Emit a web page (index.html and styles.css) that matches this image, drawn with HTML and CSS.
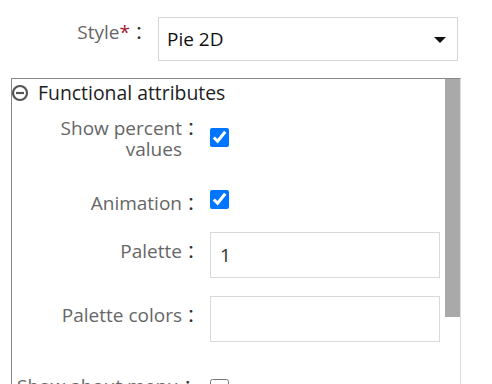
FILE: index.html
```html
<!DOCTYPE html>
<html lang="en">
<head>
    <meta charset="UTF-8">
    <meta name="viewport" content="width=device-width, initial-scale=1.0">
    <title>Chart settings</title>
    <link rel="stylesheet" href="styles.css">
</head>
<body>
    <div class="top-row">
        <label class="label" for="style"><span class="txt">Style<span class="req">*</span></span><span class="colon">：</span></label>
        <div class="select-wrap">
            <select id="style" name="style">
                <option>Pie 2D</option>
                <option>Pie 3D</option>
                <option>Doughnut 2D</option>
            </select>
            <svg class="caret" width="12" height="6" viewBox="0 0 12 6"><path d="M0 0H12L6 6Z" fill="#111"/></svg>
        </div>
    </div>

    <div class="panel">
        <div class="panel-body">
            <div class="panel-title">
                <svg class="toggle" width="20" height="20" viewBox="0 0 20 20">
                    <circle cx="8" cy="10" r="7" fill="none" stroke="#555" stroke-width="2.2"/>
                    <rect x="4" y="8.9" width="8" height="2.2" fill="#555"/>
                </svg>
                Functional attributes
            </div>

            <div class="row row-percent">
                <label class="label" for="showPercent"><span class="txt">Show percent values</span><span class="colon">：</span></label>
                <input class="check" type="checkbox" id="showPercent" checked>
            </div>
            <div class="row row-anim">
                <label class="label" for="animation"><span class="txt">Animation</span><span class="colon">：</span></label>
                <input class="check" type="checkbox" id="animation" checked>
            </div>
            <div class="row row-input">
                <label class="label" for="palette"><span class="txt">Palette</span><span class="colon">：</span></label>
                <input class="text" type="text" id="palette" value="1">
            </div>
            <div class="row row-input">
                <label class="label" for="paletteColors"><span class="txt">Palette colors</span><span class="colon">：</span></label>
                <input class="text" type="text" id="paletteColors">
            </div>
            <div class="row row-about">
                <label class="label label-left" for="aboutMenu"><span class="txt">Show about menu</span><span class="colon">：</span></label>
                <input class="check" type="checkbox" id="aboutMenu">
            </div>
        </div>
        <div class="scrollbar"><div class="thumb"></div></div>
    </div>
</body>
</html>
```

FILE: styles.css
```css
body {
    margin: 0;
    font-family: "Open Sans", "Noto Sans CJK JP", sans-serif;
    font-size: 19px;
    line-height: 20px;
    color: #222;
    background: #fff;
}
.top-row {
    display: flex;
    align-items: flex-start;
    padding-top: 17px;
}
.top-row .label {
    width: 148px;
    padding-top: 5px;
}
.label {
    display: flex;
    justify-content: flex-end;
    align-items: flex-start;
    box-sizing: border-box;
    flex: none;
    color: #666;
}
.label .txt {
    text-align: right;
}
.label-left {
    justify-content: flex-start;
    white-space: nowrap;
}
.colon {
    flex: none;
    width: 18px;
    text-align: center;
    font-family: "Noto Sans CJK JP", sans-serif;
    font-size: 18px;
    color: #333;
}
.req {
    color: #a0182c;
}
.select-wrap {
    position: relative;
    margin-left: 10px;
}
select {
    appearance: none;
    -webkit-appearance: none;
    width: 300px;
    height: 44px;
    box-sizing: border-box;
    border: 1px solid #d6d6d6;
    border-radius: 0;
    background: #fff;
    padding: 0 8px;
    font-family: "Open Sans", sans-serif;
    font-size: 19px;
    color: #111;
    outline: none;
}
.caret {
    position: absolute;
    right: 12px;
    top: 20px;
}
.panel {
    display: flex;
    margin: 17px 0 0 11px;
    width: 450px;
    height: 330px;
    box-sizing: border-box;
    border: 1px solid #8a8a8a;
    border-right-color: #dcdcdc;
    overflow: hidden;
}
.panel-body {
    flex: 1;
}
.scrollbar {
    flex: none;
    width: 15px;
    background: #fff;
}
.thumb {
    height: 238px;
    background: #a9a9a9;
}
.panel-title {
    display: flex;
    align-items: center;
    height: 28px;
    font-size: 19.4px;
    color: #222;
}
.toggle {
    margin-right: 6px;
}
.row {
    display: flex;
    align-items: flex-start;
}
.row .label {
    width: 188px;
    padding-left: 5px;
}
.row .check,
.row .text {
    margin: 0 0 0 10px;
}
.check {
    width: 19px;
    height: 19px;
}
.text {
    width: 230px;
    height: 46px;
    box-sizing: border-box;
    border: 1px solid #d9d9d9;
    padding: 0 9px;
    font-family: "Open Sans", sans-serif;
    font-size: 19px;
    color: #333;
    outline: none;
}
.row-percent {
    margin-top: 11px;
}
.row-percent .check {
    margin-top: 10px;
}
.row-percent .txt {
    line-height: 21px;
}
.row-anim {
    margin-top: 30px;
}
.row-anim .label {
    padding-top: 3px;
}
.row-input {
    margin-top: 19px;
}
.row-input + .row-input {
    margin-top: 18px;
}
.row-input .label {
    padding-top: 9px;
}
.row-about {
    margin-top: 34px;
}
.row-about .check {
    margin-top: 3px;
}
```
